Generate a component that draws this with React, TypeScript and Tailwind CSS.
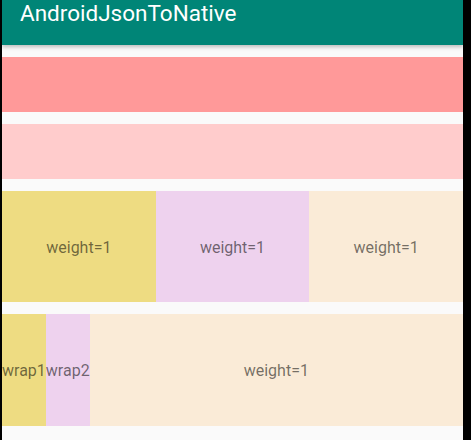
export default function App() {
  return (
    <div className="flex h-[440px] w-[471px] bg-black" style={{ fontFamily: 'Roboto, "Noto Sans", sans-serif' }}>
      <div className="ml-[2px] flex h-full w-[461px] flex-col bg-[#fafafa]">
        {/* Toolbar */}
        <div className="relative z-10 h-[45px] flex-none bg-[#008577] pl-[18px] shadow-[0_2px_4px_rgba(0,0,0,0.25)]">
          <span className="text-[22.5px] font-normal leading-[26px] text-white">AndroidJsonToNative</span>
        </div>

        <div className="flex flex-col gap-[12px] pt-[12px]">
          <div className="h-[55px] bg-[#ff9999]" />
          <div className="h-[55px] bg-[#ffcccc]" />

          <div className="flex h-[111px] text-[16px] text-black/55">
            <div className="flex flex-1 items-center justify-center pt-[2px] bg-[#eedc82]">weight=1</div>
            <div className="flex flex-1 items-center justify-center pt-[2px] bg-[#eed2ee]">weight=1</div>
            <div className="flex flex-1 items-center justify-center pt-[2px] bg-[#faebd7]">weight=1</div>
          </div>

          <div className="flex h-[112px] text-[16px] text-black/55">
            <div className="flex flex-none items-center pt-[2px] bg-[#eedc82]">wrap1</div>
            <div className="flex flex-none items-center pt-[2px] bg-[#eed2ee]">wrap2</div>
            <div className="flex flex-1 items-center justify-center pt-[2px] bg-[#faebd7]">weight=1</div>
          </div>
        </div>
      </div>
    </div>
  );
}
